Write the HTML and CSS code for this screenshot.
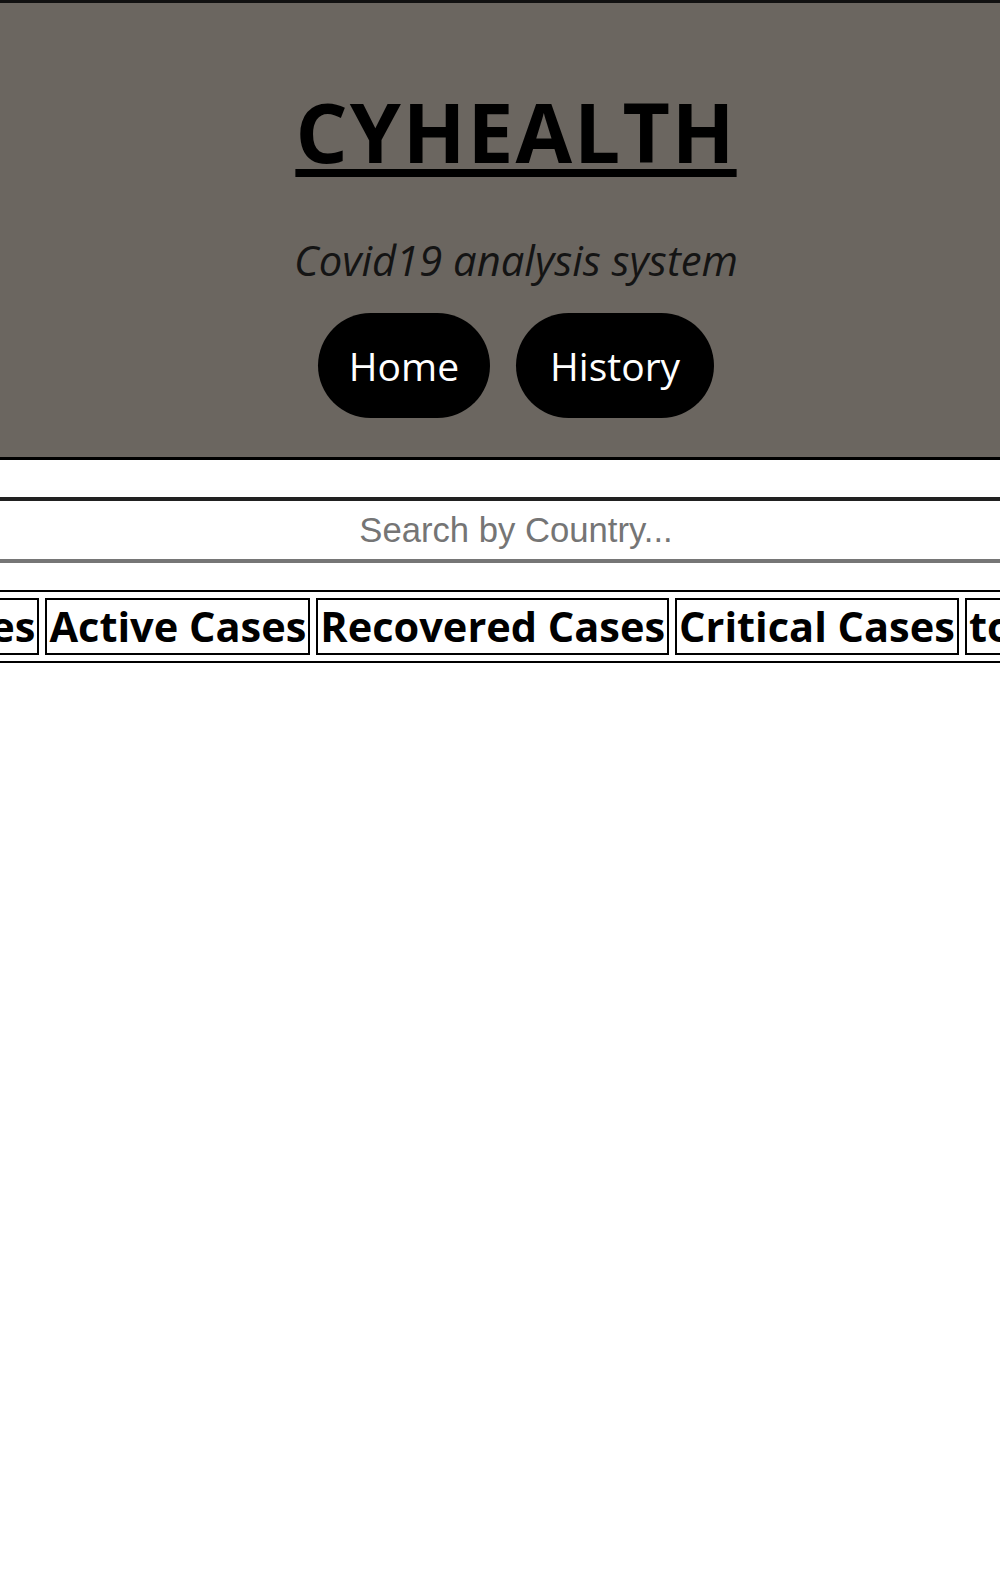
FILE: index.html
```html
<!DOCTYPE html>
<html lang="en">
<head>
<meta charset="utf-8">
<title>CYHEALTH</title>
<link rel="stylesheet" href="styles.css">
</head>
<body>
<div class="page">
  <header class="hero">
    <h1 class="brand"><a class="brand-link" href="#">CYHEALTH</a></h1>
    <p class="tagline">Covid19 analysis system</p>
    <nav class="nav">
      <a class="pill" href="#">Home</a>
      <a class="pill pill-wide" href="#">History</a>
    </nav>
  </header>
  <input class="search" type="text" placeholder="Search by Country...">
  <table class="stats">
    <thead>
      <tr>
        <th class="col-country">Country</th>
        <th>Total Cases</th>
        <th>Active Cases</th>
        <th>Recovered Cases</th>
        <th>Critical Cases</th>
        <th>today Cases</th>
        <th>today Deaths</th>
      </tr>
    </thead>
    <tbody></tbody>
  </table>
</div>
</body>
</html>
```

FILE: styles.css
```css
html, body {
  margin: 0;
  padding: 0;
  background: #fff;
  overflow-x: hidden;
}

.page {
  width: 1032px;
  display: flex;
  flex-direction: column;
  align-items: center;
  font-family: "Open Sans", "Noto Sans", sans-serif;
}

.hero {
  align-self: stretch;
  background: #6b6660;
  border-top: 3px solid #111;
  border-bottom: 3px solid #000;
  padding: 78px 0 39px;
  display: flex;
  flex-direction: column;
  align-items: center;
}

.brand {
  margin: 0;
  font-size: 82px;
  line-height: 100px;
  font-weight: 700;
  letter-spacing: 2px;
}

.brand-link {
  color: #000;
  text-decoration: underline;
  text-decoration-thickness: 8px;
  text-underline-offset: 6px;
}

.tagline {
  margin: 54px 0 0;
  font-size: 41.8px;
  line-height: 50px;
  font-style: italic;
  font-weight: 400;
  color: #141414;
}

.nav {
  margin-top: 28px;
  display: flex;
  gap: 26px;
}

.pill {
  height: 105px;
  padding: 0 31px;
  border-radius: 53px;
  background: #000;
  color: #fff;
  font-size: 39px;
  display: flex;
  align-items: center;
  text-decoration: none;
}

.pill-wide {
  padding: 0 34px;
}

.search {
  margin-top: 37px;
  width: 1100px;
  height: 66px;
  box-sizing: border-box;
  border: 4px inset #767676;
  padding: 0;
  background: #fff;
  font-family: "Liberation Sans", Arial, sans-serif;
  font-size: 34.67px;
  text-align: center;
  outline: none;
}

.search::placeholder {
  color: #757575;
}

.stats {
  margin-top: 27px;
  border: 2px solid #000;
  border-collapse: separate;
  border-spacing: 6px;
  flex-shrink: 0;
}

.stats th {
  border: 2px solid #000;
  padding: 1px 2px;
  font-size: 41.5px;
  line-height: 51px;
  font-weight: 700;
  white-space: nowrap;
  color: #000;
}

.stats .col-country {
  padding: 1px 49px;
}
```
